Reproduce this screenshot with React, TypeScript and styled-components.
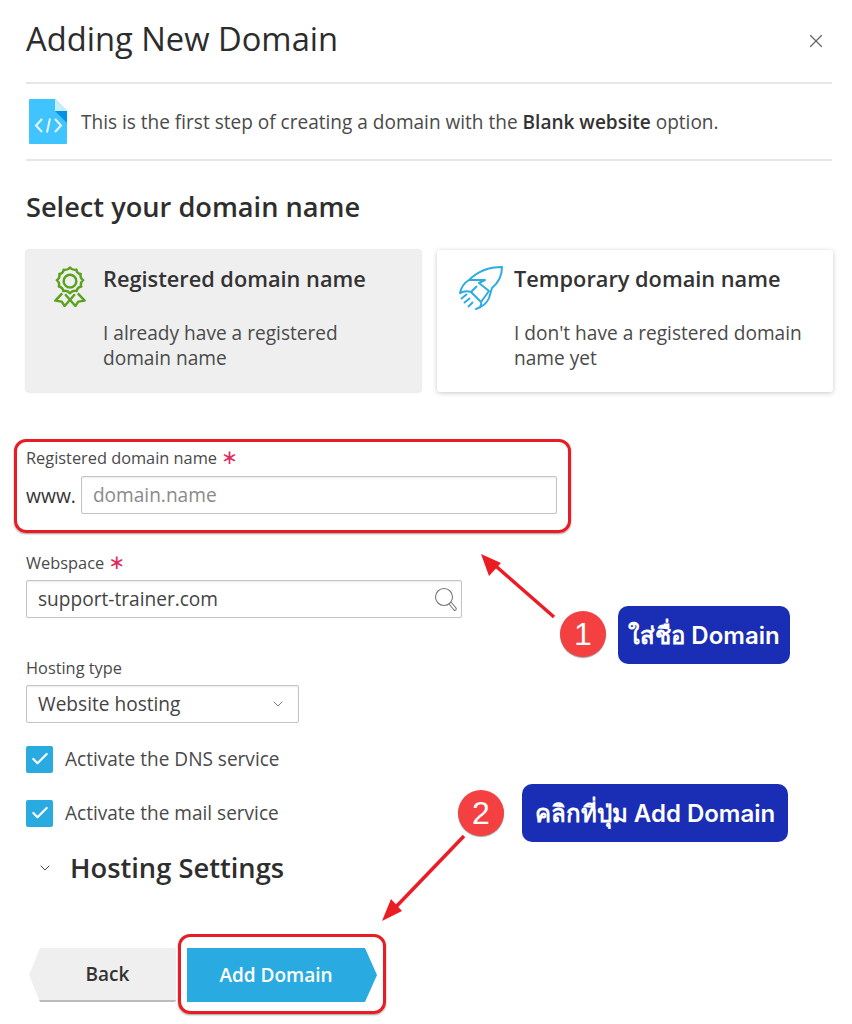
import React from 'react';
import styled, { createGlobalStyle } from 'styled-components';
import { ChevronDown, Check, X } from 'lucide-react';

const GlobalStyle = createGlobalStyle`
  html, body {
    margin: 0;
    padding: 0;
    background: #fff;
  }
  body {
    font-family: "Open Sans", "Noto Sans", sans-serif;
    color: #4a4a4a;
  }
`;

const App: React.FC = () => {
  return (
    <>
      <GlobalStyle />
      <Page>
        <Header>
          <Title>Adding New Domain</Title>
          <CloseButton>
            <X size={22} strokeWidth={1.3} />
          </CloseButton>
        </Header>
        <InfoRow>
          <FileIcon />
          <InfoText>
            This is the first step of creating a domain with the{' '}
            <b>Blank website</b> option.
          </InfoText>
        </InfoRow>
        <SectionTitle>Select your domain name</SectionTitle>
        <Cards>
          <Card $selected>
            <CardIcon>
              <AwardIcon />
            </CardIcon>
            <div>
              <CardTitle>Registered domain name</CardTitle>
              <CardText>
                I already have a registered
                <br />
                domain name
              </CardText>
            </div>
          </Card>
          <Card>
            <CardIcon>
              <RocketIcon />
            </CardIcon>
            <div>
              <CardTitle>Temporary domain name</CardTitle>
              <CardText>
                I don't have a registered domain
                <br />
                name yet
              </CardText>
            </div>
          </Card>
        </Cards>

        <DomainField>
          <Label>
            Registered domain name <Star>∗</Star>
          </Label>
          <DomainRow>
            <Prefix>www.</Prefix>
            <Placeholder>domain.name</Placeholder>
          </DomainRow>
        </DomainField>

        <WebspaceField>
          <Label>
            Webspace <Star>∗</Star>
          </Label>
          <WebspaceBox>
            support-trainer.com
            <SearchIcon />
          </WebspaceBox>
        </WebspaceField>

        <HostingField>
          <Label>Hosting type</Label>
          <SelectBox>
            Website hosting
            <ChevronDown size={16} strokeWidth={1.3} color="#666" />
          </SelectBox>
        </HostingField>

        <CheckRow>
          <CheckBox>
            <Check size={20} strokeWidth={2.6} color="#fff" />
          </CheckBox>
          Activate the DNS service
        </CheckRow>
        <CheckRow>
          <CheckBox>
            <Check size={20} strokeWidth={2.6} color="#fff" />
          </CheckBox>
          Activate the mail service
        </CheckRow>

        <SettingsRow>
          <ChevronDown size={16} strokeWidth={1.5} color="#444" />
          <SettingsTitle>Hosting Settings</SettingsTitle>
        </SettingsRow>

        <Actions>
          <BackButton>Back</BackButton>
          <AddButton>Add Domain</AddButton>
        </Actions>

        <DomainFrame />
        <ButtonFrame />
        <ArrowLayer viewBox="0 0 852 1024" width="852" height="1024">
          <line x1="554" y1="617" x2="490" y2="561" stroke="#ec1c24" strokeWidth="3.500" />
          <polygon points="481,554 501,563 489,576" fill="#ec1c24" />
          <line x1="464" y1="836" x2="391" y2="912" stroke="#ec1c24" strokeWidth="3.500" />
          <polygon points="382,921 391,899 402,911" fill="#ec1c24" />
        </ArrowLayer>
        <Badge $x={560} $y={611}>1</Badge>
        <Callout $x={618} $y={606} $w={172}>ใส่ชื่อ Domain</Callout>
        <Badge $x={458} $y={790}>2</Badge>
        <Callout $x={522} $y={784} $w={266}>คลิกที่ปุ่ม Add Domain</Callout>
      </Page>
    </>
  );
};

export default App;

const FileIcon = () => (
  <svg width="38" height="45" viewBox="0 0 38 45">
    <path d="M1 0H26L38 12V44a1 1 0 0 1-1 1H1a1 1 0 0 1-1-1V1a1 1 0 0 1 1-1z" fill="#40c4ff" />
    <path d="M26 0L38 12H26z" fill="#c5eeff" />
    <path d="M26 12H38V24z" fill="#0492e4" />
    <path d="M13 20l-6 6.500 6 6.500M26 20l6 6.500-6 6.500M21 19.500l-3 14" fill="none" stroke="#e6f7ff" strokeWidth="2" />
  </svg>
);

const AwardIcon = () => (
  <svg width="34" height="41" viewBox="0 0 34 42" fill="none" stroke="#5aa21e" strokeWidth="2.500" strokeLinejoin="round">
    <path d="M17 1.500c2 2.500 3.500 3 6.500 2.200.3 3 1.500 4.200 4.500 4.500-.8 3-.3 4.500 2.500 6.300-2.500 2-3 3.700-2 6.500-3 .5-4.200 1.700-4.700 4.700-3-.8-4.600-.3-6.800 2.200-2.200-2.500-3.800-3-6.800-2.200-.5-3-1.700-4.200-4.700-4.700 1-2.800.5-4.500-2-6.500 2.800-1.800 3.300-3.300 2.500-6.300 3-.3 4.200-1.500 4.500-4.500 3 .8 4.500.3 6.500-2.200z" />
    <circle cx="17" cy="15.500" r="6.500" />
    <path d="M9 28l-7 7.500 6.500 1 3 4.500L22 29M25 28l7 7.500-6.500 1-3 4.500L12 29" />
  </svg>
);

const RocketIcon = () => (
  <svg width="44" height="44" viewBox="0 0 44 44" fill="none" stroke="#2fabe2" strokeWidth="2" strokeLinejoin="round">
    <path d="M43 1C33 1 20 4 10 14 5 17 2 22 1 27c4-2 8-2 11-1l10 10c1 3-1 6-5 7 6-2 11-6 13-11 1-3 2-7 3-10 6-5 10-12 10-21z" />
    <path d="M10 14H26L20 17 30 25 22 36M12 26L18 20" />
    <path d="M2 33L8 28M5 37L11 32M9 41L14 36" />
  </svg>
);

const SearchIcon = () => (
  <SearchSvg width="24" height="26" viewBox="0 0 24 26" fill="none" stroke="#777" strokeWidth="1.100">
    <circle cx="10" cy="10" r="8.500" />
    <path d="M15 17l5 6c1 1 3 0 2-2l-5-6" />
  </SearchSvg>
);

const Page = styled.div`
  position: relative;
  width: 852px;
  height: 1024px;
  overflow: hidden;
  box-sizing: border-box;
  padding: 0 20px 0 26px;
`;

const Header = styled.div`
  display: flex;
  align-items: center;
  justify-content: space-between;
  height: 84px;
  padding-bottom: 5px;
  box-sizing: border-box;
  border-bottom: 2px solid #e6e6e6;
`;

const Title = styled.h1`
  margin: 0;
  font-size: 32.700px;
  font-weight: 400;
  color: #2c2c2c;
  line-height: 45px;
`;

const CloseButton = styled.div`
  display: flex;
  color: #666;
  margin-right: 5px;
  margin-top: 4px;
`;

const InfoRow = styled.div`
  display: flex;
  align-items: center;
  gap: 14px;
  height: 77px;
  box-sizing: border-box;
  padding: 0 0 0 3px;
  border-bottom: 2px solid #e6e4ef;
`;

const InfoText = styled.div`
  font-size: 19.050px;
  padding-top: 1px;
  color: #4a4a4a;
  b {
    font-weight: 600;
    color: #333;
  }
`;

const SectionTitle = styled.h2`
  margin: 28px 0 25px;
  font-size: 27.200px;
  line-height: 36px;
  font-weight: 600;
  color: #2e2e2e;
`;

const Cards = styled.div`
  display: grid;
  grid-template-columns: 395px 396px;
  gap: 16px;
`;

const Card = styled.div<{ $selected?: boolean }>`
  display: flex;
  gap: 11px;
  height: 142px;
  box-sizing: border-box;
  padding: 14px 16px 0 22px;
  border-radius: 3px;
  background: ${(p) => (p.$selected ? '#efefef' : '#fff')};
  box-shadow: ${(p) =>
    p.$selected
      ? '0 0 2px rgba(0, 0, 0, 0.25)'
      : '0 1px 5px rgba(0, 0, 0, 0.22)'};
`;

const CardIcon = styled.div`
  flex: none;
  display: flex;
  justify-content: center;
  align-items: flex-start;
  width: 44px;
  padding-top: 2px;
`;

const CardTitle = styled.div`
  font-size: 21.750px;
  line-height: 30px;
  font-weight: 600;
  color: #333;
  margin-bottom: 27px;
`;

const CardText = styled.div`
  font-size: 19.100px;
  line-height: 25px;
  color: #4a4a4a;
`;

const Label = styled.div`
  font-size: 16.350px;
  line-height: 22px;
  color: #4a4a4a;
`;

const Star = styled.span`
  color: #e3285b;
  font-family: "DejaVu Sans", sans-serif;
  font-size: 20px;
  line-height: 16px;
`;

const DomainField = styled.div`
  margin-top: 55px;
`;

const DomainRow = styled.div`
  display: flex;
  align-items: center;
  gap: 5px;
  margin-top: 7px;
`;

const Prefix = styled.div`
  font-size: 19.300px;
  color: #333;
`;

const InputBox = styled.div`
  display: flex;
  align-items: center;
  justify-content: space-between;
  height: 38px;
  box-sizing: border-box;
  padding: 0 11px;
  border: 1px solid #c4c4c4;
  border-radius: 2px;
  box-shadow: inset 0 1px 2px rgba(0, 0, 0, 0.08);
  font-size: 19.100px;
  color: #444;
`;

const Placeholder = styled(InputBox)`
  width: 476px;
  color: #8a8a8a;
`;

const WebspaceField = styled.div`
  margin-top: 38px;
`;

const WebspaceBox = styled(InputBox)`
  position: relative;
  width: 436px;
  margin-top: 6px;
`;

const SearchSvg = styled.svg`
  margin-right: -8px;
  margin-top: 2px;
`;

const HostingField = styled.div`
  margin-top: 39px;
`;

const SelectBox = styled(InputBox)`
  width: 273px;
  margin-top: 6px;
  padding-right: 12px;
`;

const CheckRow = styled.div`
  display: flex;
  align-items: center;
  gap: 12px;
  height: 28px;
  margin-top: 22px;
  font-size: 19.050px;
  color: #4a4a4a;
  & + & {
    margin-top: 26px;
  }
`;

const CheckBox = styled.span`
  display: flex;
  align-items: center;
  justify-content: center;
  width: 27px;
  height: 27px;
  border-radius: 2px;
  background: #29abe2;
`;

const SettingsRow = styled.div`
  display: flex;
  align-items: center;
  gap: 17px;
  margin-top: 23px;
  padding-left: 11px;
`;

const SettingsTitle = styled.div`
  font-size: 27.300px;
  line-height: 36px;
  font-weight: 600;
  color: #2e2e2e;
`;

const Actions = styled.div`
  display: flex;
  gap: 11px;
  margin-top: 62px;
  margin-left: 3px;
`;

const BackButton = styled.div`
  display: flex;
  align-items: center;
  justify-content: center;
  width: 147px;
  height: 54px;
  padding-left: 10px;
  font-size: 19px;
  font-weight: 600;
  color: #333;
  background: #efefef;
  border-radius: 0 2px 2px 0;
  clip-path: polygon(11px 0, 100% 0, 100% 100%, 11px 100%, 0 50%);
  border-bottom: 2px solid #bbb;
  box-sizing: border-box;
`;

const AddButton = styled.div`
  display: flex;
  align-items: center;
  justify-content: center;
  width: 190px;
  height: 54px;
  font-size: 19px;
  font-weight: 600;
  color: #fff;
  background: #29abe2;
  clip-path: polygon(0 0, calc(100% - 12px) 0, 100% 50%, calc(100% - 12px) 100%, 0 100%);
  padding-right: 12px;
  box-sizing: border-box;
`;

const DomainFrame = styled.div`
  position: absolute;
  left: 14px;
  top: 439px;
  width: 557px;
  height: 94px;
  box-sizing: border-box;
  border: 3.500px solid #e81c24;
  border-radius: 12px;
  box-shadow: 0 1px 2px rgba(0, 0, 0, 0.4);
`;

const ButtonFrame = styled.div`
  position: absolute;
  left: 178px;
  top: 934px;
  width: 208px;
  height: 80px;
  box-sizing: border-box;
  border: 3.500px solid #e81c24;
  border-radius: 12px;
  box-shadow: 0 1px 2px rgba(0, 0, 0, 0.4);
`;

const ArrowLayer = styled.svg`
  position: absolute;
  left: 0;
  top: 0;
  pointer-events: none;
`;

const Badge = styled.div<{ $x: number; $y: number }>`
  position: absolute;
  left: ${(p) => p.$x}px;
  top: ${(p) => p.$y}px;
  width: 46px;
  height: 46px;
  display: flex;
  align-items: center;
  justify-content: center;
  border-radius: 50%;
  background: #f44040;
  box-shadow: 0 1px 1px rgba(0, 0, 0, 0.4);
  color: #fff;
  font-family: "Liberation Sans", sans-serif;
  font-size: 32px;
`;

const Callout = styled.div<{ $x: number; $y: number; $w: number }>`
  position: absolute;
  left: ${(p) => p.$x}px;
  top: ${(p) => p.$y}px;
  width: ${(p) => p.$w}px;
  height: 58px;
  display: flex;
  align-items: center;
  justify-content: center;
  border-radius: 10px;
  background: #1a2db5;
  color: #fff;
  font-family: "Inter", "Noto Sans", sans-serif;
  font-size: 24px;
  font-weight: 600;
  white-space: nowrap;
`;
